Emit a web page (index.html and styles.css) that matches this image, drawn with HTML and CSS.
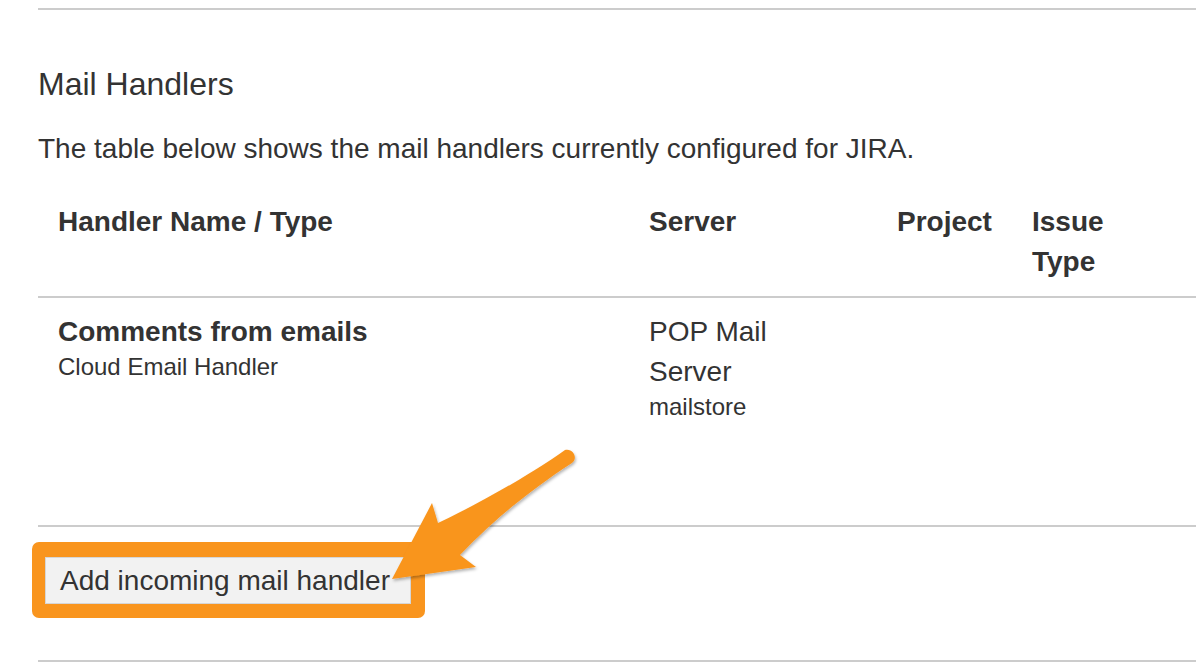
FILE: index.html
```html
<!DOCTYPE html>
<html lang="en">
<head>
<meta charset="utf-8">
<title>Mail Handlers</title>
<link rel="stylesheet" href="styles.css">
</head>
<body>
<div class="page">
  <section class="handlers">
    <h2 class="title">Mail Handlers</h2>
    <p class="intro">The table below shows the mail handlers currently configured for JIRA.</p>
    <table class="grid">
      <colgroup>
        <col class="c-name">
        <col class="c-server">
        <col class="c-project">
        <col class="c-type">
        <col class="c-rest">
      </colgroup>
      <thead>
        <tr>
          <th>Handler Name / Type</th>
          <th>Server</th>
          <th>Project</th>
          <th>Issue Type</th>
          <th class="rest"></th>
        </tr>
      </thead>
      <tbody>
        <tr>
          <td>
            <div class="strong">Comments from emails</div>
            <div class="sub">Cloud Email Handler</div>
          </td>
          <td>
            <div class="server">POP Mail Server</div>
            <div class="sub">mailstore</div>
          </td>
          <td></td>
          <td></td>
          <td class="rest"></td>
        </tr>
      </tbody>
    </table>
    <div class="actions">
      <span class="highlight"><button class="btn" type="button">Add incoming mail handler</button></span>
    </div>
  </section>
  <div class="next"></div>
  <svg class="arrow" width="1196" height="668" viewBox="0 0 1196 668" aria-hidden="true">
    <defs>
      <filter id="sh" x="-20%" y="-20%" width="140%" height="140%">
        <feDropShadow dx="1" dy="2" stdDeviation="1.5" flood-color="#000" flood-opacity="0.3"/>
      </filter>
    </defs>
    <path filter="url(#sh)" fill="#f9951e" d="M 565 450 C 530 475, 480 503, 438 523 L 432 503 L 392 579 L 476 567 L 460 555 C 495 518, 535 487, 572 463 C 578 459, 574 448, 565 450 Z"/>
  </svg>
</div>
</body>
</html>
```

FILE: styles.css
```css
html, body {
  margin: 0;
  padding: 0;
  background: #ffffff;
}

body {
  width: 1196px;
  height: 668px;
  overflow: hidden;
  font-family: "Liberation Sans", Arial, sans-serif;
  color: #333333;
}

.page {
  position: relative;
  height: 668px;
  box-sizing: border-box;
  padding: 8px 0 0 38px;
}

.handlers {
  border-top: 2px solid #cccccc;
}

.title {
  margin: 54px 0 0 0;
  font-size: 32px;
  line-height: 40px;
  font-weight: normal;
}

.intro {
  margin: 25px 0 0 0;
  font-size: 28px;
  line-height: 40px;
}

.grid {
  margin-top: 19px;
  width: 100%;
  table-layout: fixed;
  border-collapse: collapse;
  font-size: 28px;
  line-height: 40px;
}

.c-name { width: 591px; }
.c-server { width: 248px; }
.c-project { width: 135px; }
.c-type { width: 160px; }

.grid th,
.grid td {
  padding: 14px 20px;
  text-align: left;
  vertical-align: top;
}

.grid .rest {
  padding-left: 0;
  padding-right: 0;
}

.grid th {
  font-weight: bold;
  border-bottom: 2px solid #cccccc;
}

.grid td {
  padding-bottom: 103px;
  border-bottom: 2px solid #cccccc;
}

.strong {
  font-weight: bold;
}

.server {
  max-width: 200px;
}

.sub {
  font-size: 24px;
  line-height: 30px;
}

.actions {
  padding: 15px 0 42px 0;
}

.highlight {
  display: inline-block;
  margin-left: -6px;
  padding: 15px 14px 14px 13px;
  background: #f9951e;
  border-radius: 7px;
  line-height: 0;
}

.btn {
  box-sizing: border-box;
  width: 366px;
  height: 47px;
  margin: 0;
  padding: 0 0 0 14px;
  background: #f2f2f2;
  border: 1px solid #d6d6d6;
  border-radius: 0;
  font-family: "Liberation Sans", Arial, sans-serif;
  font-size: 28px;
  line-height: 45px;
  color: #333333;
  text-align: left;
}

.next {
  border-top: 2px solid #cccccc;
}

.arrow {
  position: absolute;
  left: 0;
  top: 0;
  pointer-events: none;
}
```
